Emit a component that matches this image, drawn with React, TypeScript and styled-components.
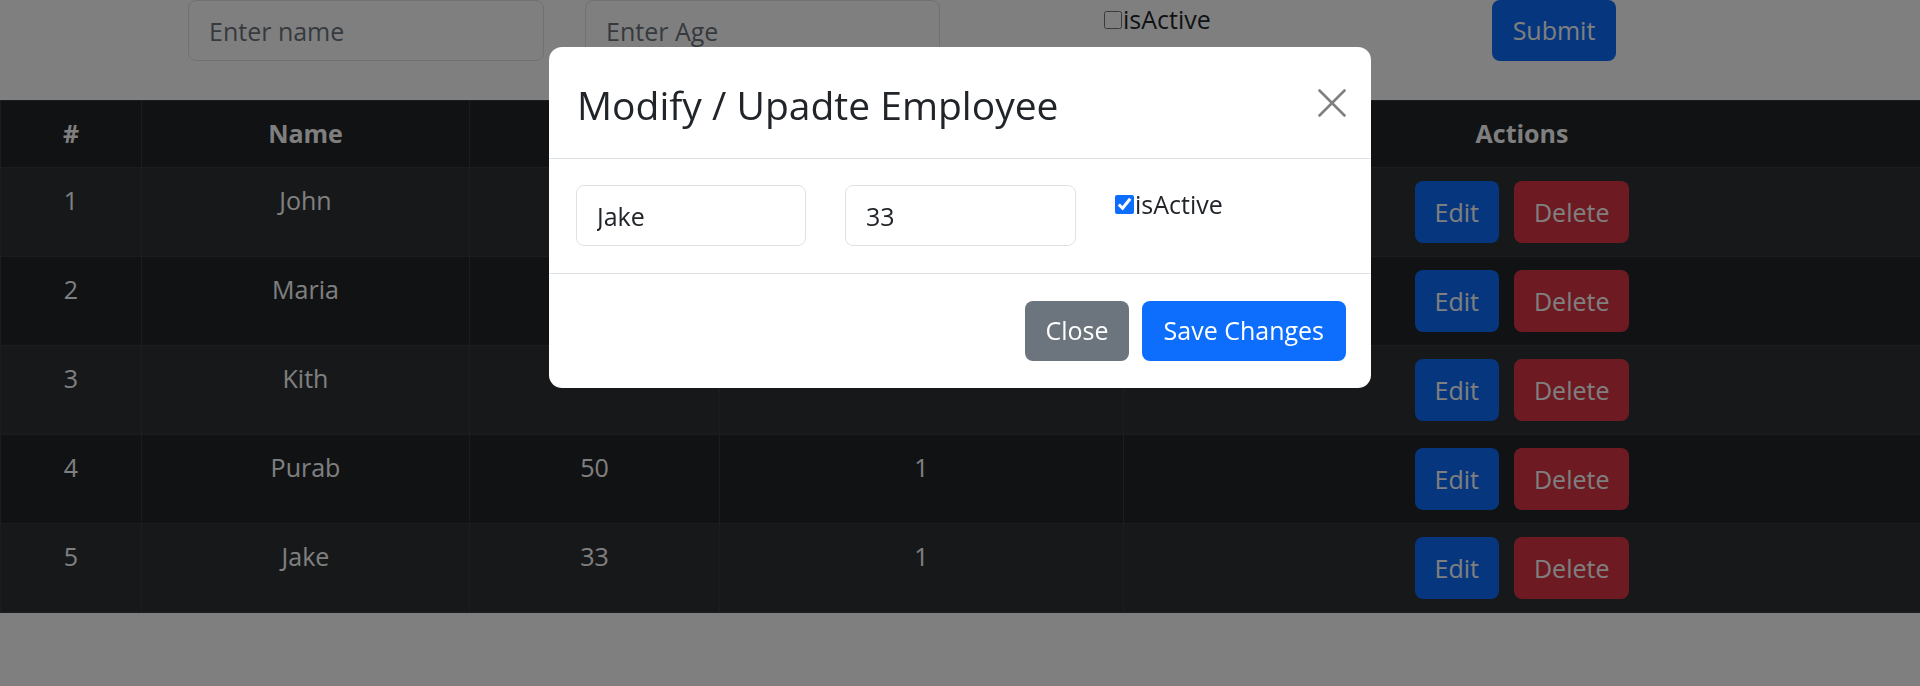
import React from "react";
import styled, { createGlobalStyle } from "styled-components";

const GlobalStyle = createGlobalStyle`
  * {
    box-sizing: border-box;
  }
  html,
  body {
    margin: 0;
    padding: 0;
  }
  body {
    font-family: "Open Sans", "Noto Sans", sans-serif;
    font-size: 25px;
    line-height: 1.5;
    color: #212529;
    background: #fff;
  }
`;

type Employee = {
  id: number;
  name: string;
  age: number;
  isActive: number;
};

const employees: Employee[] = [
  { id: 1, name: "John", age: 30, isActive: 1 },
  { id: 2, name: "Maria", age: 27, isActive: 0 },
  { id: 3, name: "Kith", age: 25, isActive: 1 },
  { id: 4, name: "Purab", age: 50, isActive: 1 },
  { id: 5, name: "Jake", age: 33, isActive: 1 },
];

const columns = [
  { label: "#", width: 141 },
  { label: "Name", width: 328 },
  { label: "Age", width: 250 },
  { label: "isActive", width: 404 },
  { label: "Actions", width: 797 },
];

const Page = styled.div`
  height: 686px;
  overflow: hidden;
`;

const EntryForm = styled.div`
  display: grid;
  grid-template-columns: 397px 519px 388px 124px;
  align-items: start;
  height: 100px;
  padding-left: 188px;
`;

const TextInput = styled.input<{ $width: number }>`
  width: ${(p) => p.$width}px;
  height: 61px;
  padding: 0 20px;
  border: 1px solid #dee2e6;
  border-radius: 8px;
  background: #fff;
  font: inherit;
  color: #212529;
  outline: none;

  &::placeholder {
    color: #6c757d;
  }
`;

const CheckLabel = styled.label`
  display: flex;
  align-items: center;
  height: 39px;
  line-height: 39px;
  color: #212529;
`;

const CheckBox = styled.input<{ $size: number }>`
  width: ${(p) => p.$size}px;
  height: ${(p) => p.$size}px;
  margin: 0 1px 0 0;
  accent-color: #0d6efd;
`;

const Button = styled.button<{
  $variant: "primary" | "danger" | "secondary";
  $height: number;
  $pad?: number;
}>`
  height: ${(p) => p.$height}px;
  padding: 0 ${(p) => p.$pad ?? 20}px;
  border: none;
  border-radius: 8px;
  font: inherit;
  color: #fff;
  background: ${(p) =>
    p.$variant === "primary"
      ? "#0d6efd"
      : p.$variant === "danger"
      ? "#dc3545"
      : "#6c757d"};
  cursor: pointer;
`;

const Table = styled.table`
  width: 100%;
  border-collapse: collapse;
  table-layout: fixed;
  background: #212529;
  color: #fff;
`;

const HeadCell = styled.th`
  padding: 13px 13px 14px;
  line-height: 39px;
  font-weight: 700;
  text-align: center;
  border: 1px solid #373b3e;
`;

const Row = styled.tr<{ $striped: boolean }>`
  background: ${(p) => (p.$striped ? "#2c3034" : "#212529")};
`;

const Cell = styled.td`
  padding: 13px;
  line-height: 39px;
  text-align: center;
  vertical-align: top;
  border: 1px solid #373b3e;
`;

const ActionGroup = styled.div`
  display: flex;
  justify-content: center;
  gap: 15px;
`;

const Backdrop = styled.div`
  position: fixed;
  inset: 0;
  background: rgba(0, 0, 0, 0.5);
`;

const Dialog = styled.div`
  position: fixed;
  top: 47px;
  left: 50%;
  width: 822px;
  transform: translateX(-50%);
  background: #fff;
  border-radius: 13px;
  overflow: hidden;
`;

const DialogHeader = styled.div`
  display: flex;
  align-items: center;
  justify-content: space-between;
  height: 112px;
  padding: 0 25px 0 28px;
  border-bottom: 1px solid #dee2e6;
`;

const DialogTitle = styled.h4`
  margin: 6px 0 0;
  font-size: 39px;
  font-weight: 500;
  line-height: 1.2;
  color: #212529;
`;

const CloseIcon = styled.button`
  display: flex;
  padding: 0;
  border: none;
  background: none;
  cursor: pointer;
`;

const DialogBody = styled.div`
  display: grid;
  grid-template-columns: 230px 231px auto;
  column-gap: 39px;
  align-items: start;
  padding: 26px 26px 27px 27px;
  border-bottom: 1px solid #dee2e6;
`;

const DialogFooter = styled.div`
  display: flex;
  justify-content: flex-end;
  gap: 13px;
  padding: 27px 25px;
`;

const App: React.FC = () => {
  return (
    <Page>
      <GlobalStyle />
      <EntryForm>
        <TextInput $width={356} placeholder="Enter name" />
        <TextInput $width={355} placeholder="Enter Age" />
        <CheckLabel>
          <CheckBox $size={18} type="checkbox" />
          isActive
        </CheckLabel>
        <Button $variant="primary" $height={61}>
          Submit
        </Button>
      </EntryForm>

      <Table>
        <colgroup>
          {columns.map((c) => (
            <col key={c.label} style={{ width: c.width }} />
          ))}
        </colgroup>
        <thead>
          <tr>
            {columns.map((c) => (
              <HeadCell key={c.label}>{c.label}</HeadCell>
            ))}
          </tr>
        </thead>
        <tbody>
          {employees.map((e, i) => (
            <Row key={e.id} $striped={i % 2 === 0}>
              <Cell>{e.id}</Cell>
              <Cell>{e.name}</Cell>
              <Cell>{e.age}</Cell>
              <Cell>{e.isActive}</Cell>
              <Cell>
                <ActionGroup>
                  <Button $variant="primary" $height={62}>
                    Edit
                  </Button>
                  <Button $variant="danger" $height={62}>
                    Delete
                  </Button>
                </ActionGroup>
              </Cell>
            </Row>
          ))}
        </tbody>
      </Table>

      <Backdrop />

      <Dialog>
        <DialogHeader>
          <DialogTitle>Modify / Upadte Employee</DialogTitle>
          <CloseIcon aria-label="Close">
            <svg width="28" height="28" viewBox="0 0 28 28">
              <path
                d="M1.5 1.5 L26.5 26.5 M26.5 1.5 L1.5 26.5"
                stroke="#808080"
                strokeWidth="2.6"
                strokeLinecap="round"
              />
            </svg>
          </CloseIcon>
        </DialogHeader>
        <DialogBody>
          <TextInput $width={230} defaultValue="Jake" />
          <TextInput $width={231} defaultValue="33" />
          <CheckLabel>
            <CheckBox $size={19} type="checkbox" defaultChecked />
            isActive
          </CheckLabel>
        </DialogBody>
        <DialogFooter>
          <Button $variant="secondary" $height={60}>
            Close
          </Button>
          <Button $variant="primary" $height={60} $pad={22}>
            Save Changes
          </Button>
        </DialogFooter>
      </Dialog>
    </Page>
  );
};

export default App;
